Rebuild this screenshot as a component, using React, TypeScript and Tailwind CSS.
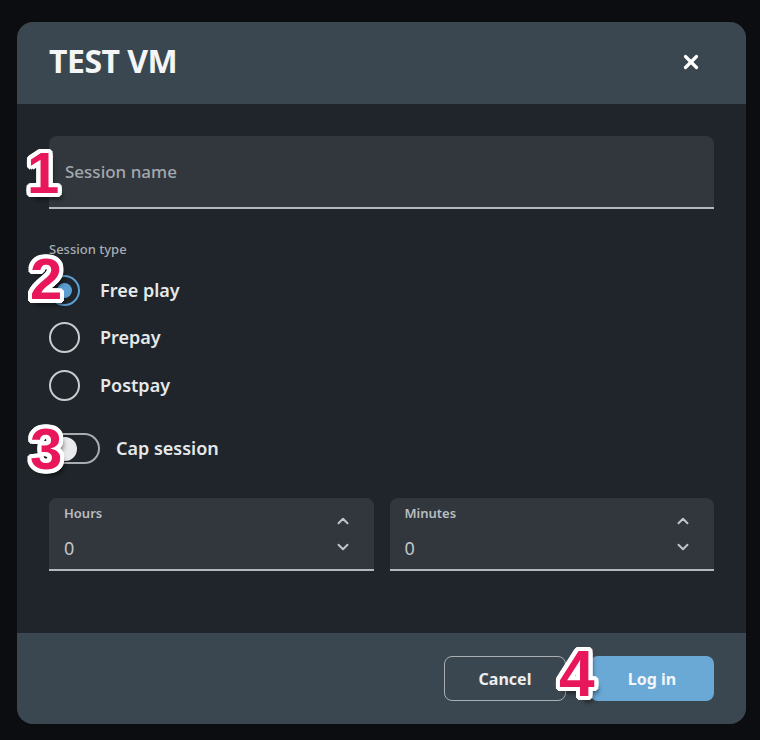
import { ChevronDown, ChevronUp, X } from "lucide-react";

const font = "font-['Noto_Sans','Open_Sans',sans-serif]";

function Marker({ n, className }: { n: string; className: string }) {
  return (
    <span
      className={`pointer-events-none absolute z-10 font-['Liberation_Sans',Arial,sans-serif] leading-none font-bold text-[#e8165a] [text-shadow:4px_0_0_#fff,-4px_0_0_#fff,0_4px_0_#fff,0_-4px_0_#fff,3px_3px_0_#fff,-3px_-3px_0_#fff,3px_-3px_0_#fff,-3px_3px_0_#fff,2px_4px_0_#fff,4px_2px_0_#fff,-2px_4px_0_#fff,-4px_2px_0_#fff,2px_-4px_0_#fff,4px_-2px_0_#fff,-2px_-4px_0_#fff,-4px_-2px_0_#fff,4px_6px_5px_rgba(0,0,0,0.55)] ${className}`}
    >
      {n}
    </span>
  );
}

function Radio({ label, checked }: { label: string; checked?: boolean }) {
  return (
    <div className="flex h-[47.5px] items-center gap-[20px]">
      <span
        className={`flex h-[31px] w-[31px] items-center justify-center rounded-full border-2 ${
          checked ? "border-[#5b9fd3]" : "border-[#c9cccf]"
        }`}
      >
        {checked && <span className="h-[15px] w-[15px] rounded-full bg-[#5b9fd3]" />}
      </span>
      <span className="text-[18px] font-semibold text-[#e6e8ea]">{label}</span>
    </div>
  );
}

function NumberField({ label }: { label: string }) {
  return (
    <div className="flex h-[73px] flex-1 items-stretch rounded-t-[8px] border-b-2 border-[#b4b8bc] bg-[#31373d] pl-[15px] pr-[22px]">
      <div className="flex flex-1 flex-col pt-[6px]">
        <span className="text-[13px] font-semibold text-[#b9bdc1]">{label}</span>
        <span className="mt-[11px] text-[18px] text-[#c3c6c9]">0</span>
      </div>
      <div className="flex flex-col items-center justify-center gap-[8px] text-[#c3c6c9]">
        <ChevronUp size={18} strokeWidth={2.6} />
        <ChevronDown size={18} strokeWidth={2.6} />
      </div>
    </div>
  );
}

export default function App() {
  return (
    <div className={`relative h-[740px] w-[760px] overflow-hidden bg-[#0b0d10] pt-[22px] pl-[17px] ${font}`}>
      <div className="flex h-[702px] w-[729px] flex-col overflow-hidden rounded-[16px] bg-[#1f252b]">
        <header className="flex h-[82px] items-center justify-between bg-[#3b4750] pb-[5px] pl-[32px] pr-[44px]">
          <h1 className="text-[32px] font-bold tracking-[-0.5px] text-[#f4f5f6]">TEST VM</h1>
          <X size={22} strokeWidth={3.5} className="mt-[3px] text-white" />
        </header>

        <div className="relative flex-1 px-[32px] pt-[32px]">
          <div className="flex h-[73px] items-center rounded-t-[8px] border-b-2 border-[#b4b8bc] bg-[#31373d] px-[16px]">
            <span className="text-[17px] font-medium text-[#a3a8ad]">Session name</span>
          </div>

          <p className="mt-[31px] text-[13px] font-medium text-[#a8adb2]">Session type</p>
          <div className="mt-[7px] flex flex-col">
            <Radio label="Free play" checked />
            <Radio label="Prepay" />
            <Radio label="Postpay" />
          </div>

          <div className="mt-[24px] flex items-center gap-[16px]">
            <span className="flex h-[31px] w-[51px] items-center rounded-full border-2 border-[#a9adb1] px-[2px]">
              <span className="h-[24px] w-[24px] rounded-full bg-[#e9eaeb]" />
            </span>
            <span className="text-[18px] font-semibold text-[#e6e8ea]">Cap session</span>
          </div>

          <div className="mt-[34px] flex gap-[16px]">
            <NumberField label="Hours" />
            <NumberField label="Minutes" />
          </div>
        </div>

        <footer className="flex h-[91px] items-center justify-end gap-[24px] bg-[#3b4750] px-[32px]">
          <button className="h-[45px] w-[122px] rounded-[8px] border-[1.5px] border-[#a9aeb2] text-[16px] font-bold text-[#eceeef]">
            Cancel
          </button>
          <button className="h-[45px] w-[124px] rounded-[8px] bg-[#6aa9d6] text-[16px] font-bold text-[#f2f6fa]">
            Log in
          </button>
        </footer>
      </div>

      <Marker n="1" className="left-[27px] top-[144px] text-[58px]" />
      <Marker n="2" className="left-[30px] top-[250px] text-[58px]" />
      <Marker n="3" className="left-[30px] top-[420px] text-[58px]" />
      <Marker n="4" className="left-[559px] top-[642px] text-[64px]" />
    </div>
  );
}
